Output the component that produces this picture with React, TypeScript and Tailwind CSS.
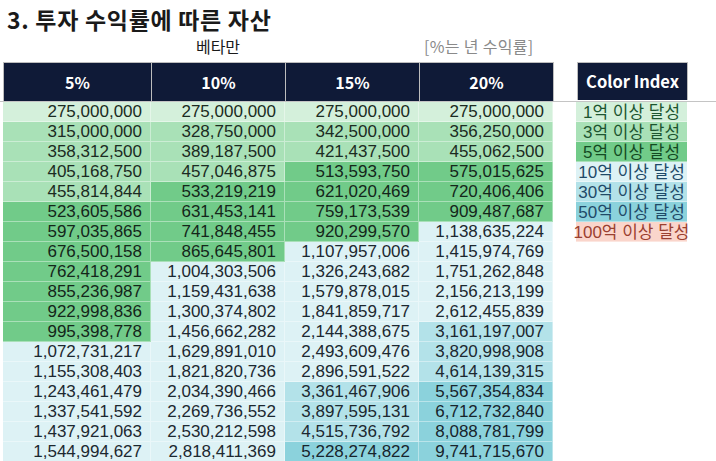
import React from 'react'

const COLS = ['5%', '10%', '15%', '20%']

const DATA: number[][] = [
  [275000000, 315000000, 358312500, 405168750, 455814844, 523605586, 597035865, 676500158, 762418291, 855236987, 922998836, 995398778, 1072731217, 1155308403, 1243461479, 1337541592, 1437921063, 1544994627],
  [275000000, 328750000, 389187500, 457046875, 533219219, 631453141, 741848455, 865645801, 1004303506, 1159431638, 1300374802, 1456662282, 1629891010, 1821820736, 2034390466, 2269736552, 2530212598, 2818411369],
  [275000000, 342500000, 421437500, 513593750, 621020469, 759173539, 920299570, 1107957006, 1326243682, 1579878015, 1841859717, 2144388675, 2493609476, 2896591522, 3361467906, 3897595131, 4515736792, 5228274822],
  [275000000, 356250000, 455062500, 575015625, 720406406, 909487687, 1138635224, 1415974769, 1751262848, 2156213199, 2612455839, 3161197007, 3820998908, 4614139315, 5567354834, 6712732840, 8088781799, 9741715670],
]

// background + text colour for each level
const LEVELS = [
  { label: '1억 이상 달성', min: 1e8, cell: 'bg-[#d4f0db] text-[#1b2b22]', index: 'bg-[#d4f0db] text-[#1d5530]' },
  { label: '3억 이상 달성', min: 3e8, cell: 'bg-[#a9e1b7] text-[#1b2b22]', index: 'bg-[#a9e1b7] text-[#1d5530]' },
  { label: '5억 이상 달성', min: 5e8, cell: 'bg-[#71cb89] text-[#14261a]', index: 'bg-[#71cb89] text-[#134a22]' },
  { label: '10억 이상 달성', min: 1e9, cell: 'bg-[#ddf2f5] text-[#1c2830]', index: 'bg-[#ddf2f5] text-[#1f4a68]' },
  { label: '30억 이상 달성', min: 3e9, cell: 'bg-[#b3e2e9] text-[#1c2830]', index: 'bg-[#b3e2e9] text-[#1f4a68]' },
  { label: '50억 이상 달성', min: 5e9, cell: 'bg-[#8bd2dc] text-[#17242c]', index: 'bg-[#8bd2dc] text-[#1f4a68]' },
  { label: '100억 이상 달성', min: 1e10, cell: 'bg-[#fad5cb] text-[#3a2420]', index: 'bg-[#fad5cb] text-[#9a4030]' },
]

const levelFor = (v: number) => {
  let lvl = LEVELS[0]
  for (const l of LEVELS) if (v >= l.min) lvl = l
  return lvl
}

const COL_W = ['w-[148px]', 'w-[134px]', 'w-[134px]', 'w-[134px]']

export default function App() {
  return (
    <div className="w-[716px] h-[461px] overflow-hidden bg-white" style={{ fontFamily: '"Noto Sans CJK KR", sans-serif' }}>
      <div className="pl-[7px] pt-[3px] h-[35px] leading-[32px] text-[23px] tracking-[0.03em] font-bold text-[#1a1a1a]">
        3. 투자 수익률에 따른 자산
      </div>

      <div className="flex h-[27px] leading-[22px] text-[16px] pl-[3px]">
        <div className="w-[148px]" />
        <div className="w-[134px] text-center text-[#1a1a1a]">베타만</div>
        <div className="w-[134px]" />
        <div className="w-[134px] pl-[5px] tracking-[0.02em] whitespace-nowrap text-[#8a8a8a]">[%는 년 수익률]</div>
      </div>

      {/* header strip with the sheet line under it */}
      <div className="flex border-b border-[#c4c4c4] pl-[3px]">
        <div className="flex border-t border-l border-[#bdbdbd] bg-[#0f1a37]">
          {COLS.map((c, i) => (
            <div
              key={c}
              className={`${COL_W[i]} h-[38px] flex items-center justify-center text-white font-bold text-[16px] border-r border-[#bdbdbd]`}
            >
              {c}
            </div>
          ))}
        </div>
        <div className="ml-[23px] w-[111px] h-[38px] flex items-center justify-center bg-[#0f1a37] text-white font-bold text-[16.5px] border-t border-l border-r border-[#bdbdbd]">
          Color Index
        </div>
      </div>

      <div className="flex pl-[3px]">
        <div className="flex">
          {DATA.map((col, ci) => (
            <div key={ci} className={COL_W[ci]}>
              {col.map((v, ri) => (
                <div
                  key={ri}
                  className={`h-[20px] pr-[8px] text-right text-[17px] leading-[20px] border-r border-b border-white/40 ${levelFor(v).cell}`}
                  style={{ fontFamily: '"Liberation Sans", Arial, sans-serif' }}
                >
                  {v.toLocaleString('en-US')}
                </div>
              ))}
            </div>
          ))}
        </div>
        <div className="ml-[23px] w-[111px]">
          {LEVELS.map(l => (
            <div
              key={l.label}
              className={`h-[20px] pt-[2px] leading-[18px] text-[17px] whitespace-nowrap flex justify-center border-b border-white/40 ${l.index}`}
              style={{ fontFamily: '"Liberation Sans", "Noto Sans CJK KR", sans-serif' }}
            >
              {l.label}
            </div>
          ))}
        </div>
      </div>
    </div>
  )
}
